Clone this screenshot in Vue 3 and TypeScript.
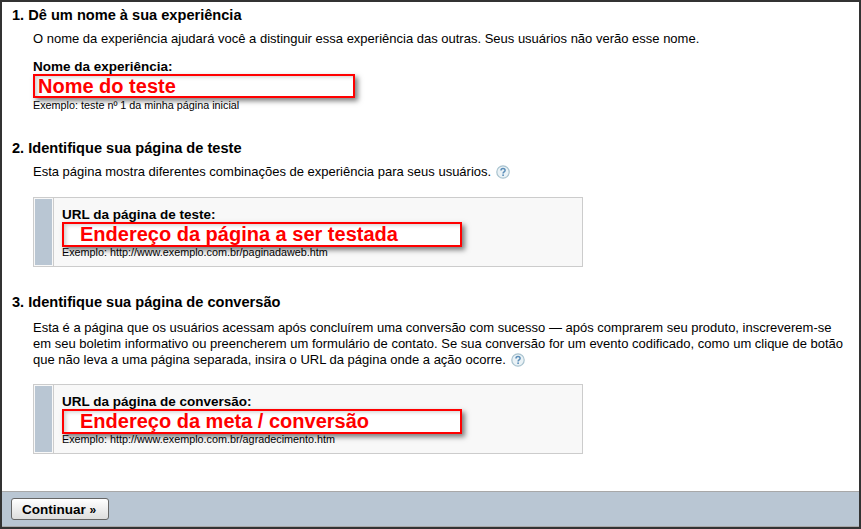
<template>
  <div class="frame">
    <div class="content">
      <section v-for="step in steps" :key="step.title" class="step">
        <h2 class="step-title">{{ step.title }}</h2>
        <p class="step-text">
          {{ step.text }}
          <svg v-if="step.help" class="help" viewBox="0 0 14 14" width="14" height="14">
            <circle cx="7" cy="7" r="6.2" fill="#eaf2f6" stroke="#a9c3cf" stroke-width="1.2" />
            <path d="M5 5.4C5 4.2 6 3.6 7 3.6c1.2 0 2.1.7 2.1 1.8 0 1.5-2 1.5-2 3" fill="none" stroke="#5b8db8" stroke-width="1.5" />
            <rect x="6.3" y="9.4" width="1.6" height="1.6" fill="#5b8db8" />
          </svg>
        </p>
        <div class="field" :class="{ boxed: step.boxed }">
          <div v-if="step.boxed" class="field-bar"></div>
          <div class="field-body">
            <label class="field-label">{{ step.label }}</label>
            <div class="mark" :class="{ wide: step.boxed }">{{ step.mark }}</div>
            <div class="field-hint">{{ step.hint }}</div>
          </div>
        </div>
      </section>
    </div>
    <div class="footer">
      <button class="continue" type="button">Continuar <span class="arrows">»</span></button>
    </div>
  </div>
</template>

<script setup lang="ts">
interface Step {
  title: string;
  text: string;
  help: boolean;
  boxed: boolean;
  label: string;
  mark: string;
  hint: string;
}

const steps: Step[] = [
  {
    title: "1. Dê um nome à sua experiência",
    text: "O nome da experiência ajudará você a distinguir essa experiência das outras. Seus usuários não verão esse nome.",
    help: false,
    boxed: false,
    label: "Nome da experiência:",
    mark: "Nome do teste",
    hint: "Exemplo: teste nº 1 da minha página inicial",
  },
  {
    title: "2. Identifique sua página de teste",
    text: "Esta página mostra diferentes combinações de experiência para seus usuários.",
    help: true,
    boxed: true,
    label: "URL da página de teste:",
    mark: "Endereço da página a ser testada",
    hint: "Exemplo: http://www.exemplo.com.br/paginadaweb.htm",
  },
  {
    title: "3. Identifique sua página de conversão",
    text: "Esta é a página que os usuários acessam após concluírem uma conversão com sucesso — após comprarem seu produto, inscreverem-se em seu boletim informativo ou preencherem um formulário de contato. Se sua conversão for um evento codificado, como um clique de botão que não leva a uma página separada, insira o URL da página onde a ação ocorre.",
    help: true,
    boxed: true,
    label: "URL da página de conversão:",
    mark: "Endereço da meta / conversão",
    hint: "Exemplo: http://www.exemplo.com.br/agradecimento.htm",
  },
];
</script>

<style>
html,
body {
  margin: 0;
  background: #fff;
}
</style>

<style scoped>
.frame {
  box-sizing: border-box;
  width: 861px;
  height: 529px;
  border: 2px solid #333;
  display: flex;
  flex-direction: column;
  font-family: "Liberation Sans", Arial, sans-serif;
  color: #000;
  background: #fff;
}

.content {
  flex: 1;
  padding: 5px 10px 0;
}

.step {
  height: 133px;
}

.step:nth-child(2) {
  height: 154px;
}

.step:last-child {
  height: auto;
}

.step-title {
  margin: 0;
  font-size: 14.6px;
  line-height: 16px;
  font-weight: bold;
}

.step-text {
  margin: 8px 0 0 21px;
  font-size: 13px;
  line-height: 16px;
}

.step:last-child .step-text {
  margin-top: 10px;
}

.help {
  vertical-align: -3px;
  margin-left: 1px;
}

.field {
  margin: 13px 0 0 21px;
}

.field.boxed {
  box-sizing: border-box;
  display: flex;
  width: 550px;
  height: 70px;
  margin-top: 16px;
  border: 1px solid #ccc;
  background: #f8f8f8;
}

.step:nth-child(2) .field.boxed {
  margin-top: 17px;
}

.field-bar {
  width: 17px;
  margin: 1px;
  background: #b9c6d3;
  flex-shrink: 0;
}

.field.boxed .field-body {
  padding: 10px 0 0 8px;
  border-left: 1px solid #ccc;
}

.field-label {
  display: block;
  font-size: 13.5px;
  line-height: 14px;
  font-weight: bold;
}

.mark {
  box-sizing: border-box;
  width: 322px;
  height: 24px;
  padding-left: 3px;
  border: 2px solid #f00;
  background: #fff;
  box-shadow: 3px 3px 5px rgba(0, 0, 0, 0.5), inset 4px 3px 4px -2px rgba(0, 0, 0, 0.2);
  color: #f00;
  font-size: 20px;
  line-height: 20px;
  font-weight: bold;
}

.mark.wide {
  width: 400px;
  height: 25px;
  padding-left: 16px;
}

.field-hint {
  margin-top: 1px;
  font-size: 10.8px;
  line-height: 12px;
}

.field.boxed .field-hint {
  margin-top: -1px;
}

.footer {
  height: 36px;
  box-sizing: border-box;
  display: flex;
  align-items: center;
  padding-left: 9px;
  border-top: 1px solid #a8a8a8;
  border-bottom: 1px solid #a8a8a8;
  background: #b9c6d3;
}

.continue {
  width: 98px;
  height: 22px;
  padding: 0 2px 0 0;
  border: 1px solid #666;
  border-radius: 3px;
  background: linear-gradient(#fff, #ddd);
  font-family: inherit;
  font-size: 13.5px;
  font-weight: bold;
  color: #000;
}

.arrows {
  font-size: 12px;
}
</style>
